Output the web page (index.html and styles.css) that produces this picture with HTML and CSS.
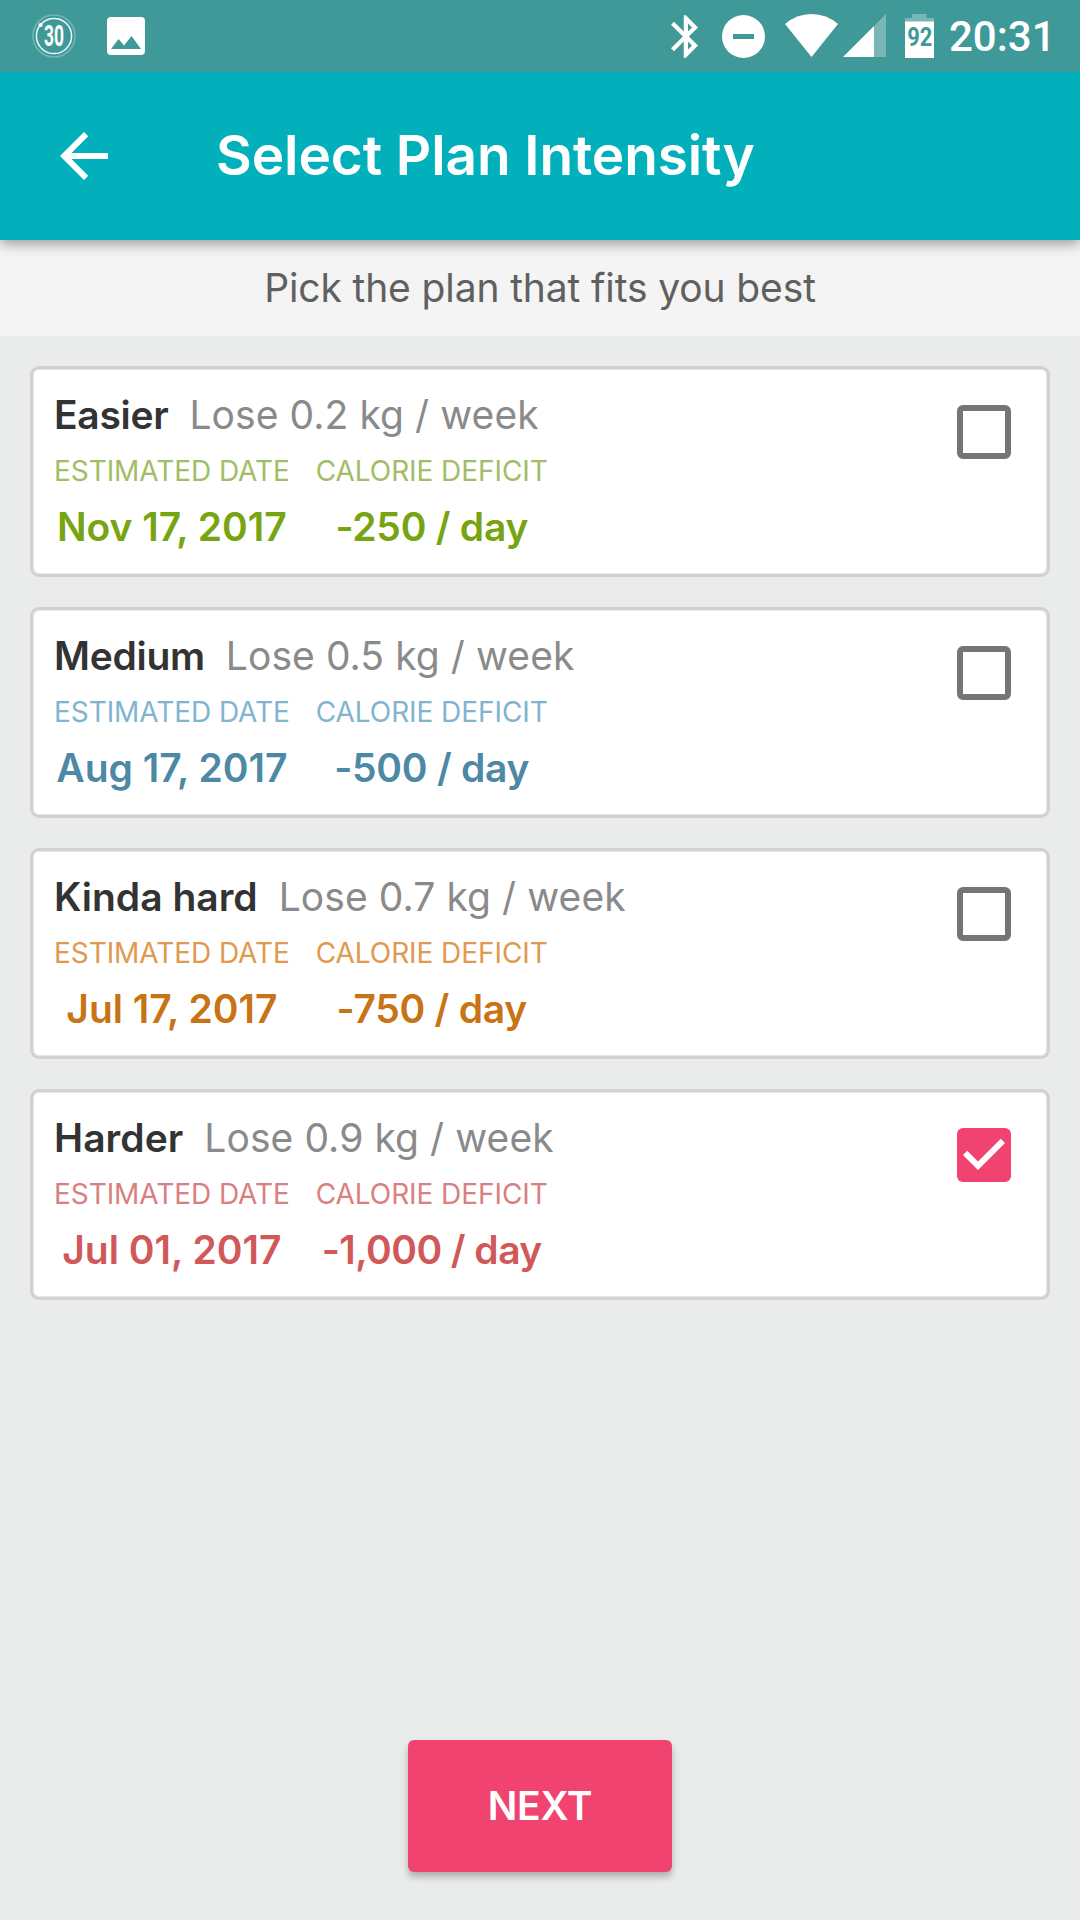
FILE: index.html
```html
<!DOCTYPE html>
<html lang="en">
<head>
<meta charset="utf-8">
<title>Select Plan Intensity</title>
<link rel="stylesheet" href="styles.css">
</head>
<body>
<div class="status-bar">
  <div class="status-group">
    <svg class="icon-app" width="46" height="46" viewBox="0 0 46 46">
      <circle cx="23" cy="23" r="21" fill="none" stroke="#fff" stroke-opacity=".28" stroke-width="1.6"/>
      <circle cx="23" cy="23" r="17.6" fill="none" stroke="#fff" stroke-opacity=".92" stroke-width="1.5"/>
      <circle cx="9.6" cy="12" r="2.1" fill="#fff"/>
      <text class="app-number" transform="translate(23 33.4) scale(.6 1)" text-anchor="middle">30</text>
    </svg>
    <svg class="icon-image" width="38" height="38" viewBox="0 0 38 38">
      <path fill="#fff" fill-rule="evenodd" d="M4 0h30a4 4 0 0 1 4 4v30a4 4 0 0 1-4 4H4a4 4 0 0 1-4-4V4a4 4 0 0 1 4-4zM4 32h30L24.500 19 17 28.500 11.500 22z"/>
    </svg>
  </div>
  <div class="status-group">
    <svg class="icon-bluetooth" width="27" height="43" viewBox="5 2 12.710 20">
      <path fill="#fff" d="M17.710 7.710L12 2h-1v7.590L6.410 5 5 6.410 10.590 12 5 17.590 6.410 19 11 14.410V22h1l5.710-5.710-4.300-4.290 4.300-4.290zM13 5.830l1.880 1.880L13 9.590V5.830zm1.880 10.460L13 18.170v-3.760l1.880 1.880z"/>
    </svg>
    <svg class="icon-dnd" width="43" height="43" viewBox="0 0 43 43">
      <path fill="#fff" fill-rule="evenodd" d="M21.500 0a21.500 21.500 0 1 1 0 43a21.500 21.500 0 1 1 0-43zM11 19v5h21v-5z"/>
    </svg>
    <svg class="icon-wifi" width="53" height="43" viewBox="0 0 53 43">
      <path fill="#fff" d="M26.500 43L0 10Q11.500 0 26.500 0T53 10z"/>
    </svg>
    <svg class="icon-signal" width="43" height="43" viewBox="0 0 43 43">
      <path fill="#fff" fill-opacity=".3" d="M31 12L43 0v43H31z"/>
      <path fill="#fff" d="M0 43L31 12v31z"/>
    </svg>
    <svg class="icon-battery" width="29" height="44" viewBox="0 0 29 44">
      <path fill="#fff" fill-opacity=".3" d="M7 0h14.500v4H29v4H0V4h7z"/>
      <path fill="#fff" d="M0 7.500h29V44H0z"/>
      <text class="battery-level" transform="translate(14.700 32) scale(.84 1)" text-anchor="middle">92</text>
    </svg>
    <span class="clock">20:31</span>
  </div>
</div>
<header class="app-bar">
  <svg class="back" width="72" height="72" viewBox="0 0 24 24"><path fill="#fff" d="M20 11H7.830l5.590-5.590L12 4l-8 8 8 8 1.410-1.410L7.830 13H20v-2z"/></svg>
  <h1 class="title">Select Plan Intensity</h1>
</header>
<p class="subtitle">Pick the plan that fits you best</p>
<main class="plans">
  <section class="plan easier">
    <div class="info">
      <div class="heading"><span class="name">Easier</span><span class="rate">Lose 0.2 kg / week</span></div>
      <div class="stats">
        <div class="stat"><span class="label">ESTIMATED DATE</span><span class="value">Nov 17, 2017</span></div>
        <div class="stat"><span class="label">CALORIE DEFICIT</span><span class="value deficit">-250 / day</span></div>
      </div>
    </div>
    <span class="checkbox"></span>
  </section>
  <section class="plan medium">
    <div class="info">
      <div class="heading"><span class="name">Medium</span><span class="rate">Lose 0.5 kg / week</span></div>
      <div class="stats">
        <div class="stat"><span class="label">ESTIMATED DATE</span><span class="value">Aug 17, 2017</span></div>
        <div class="stat"><span class="label">CALORIE DEFICIT</span><span class="value deficit">-500 / day</span></div>
      </div>
    </div>
    <span class="checkbox"></span>
  </section>
  <section class="plan kinda-hard">
    <div class="info">
      <div class="heading"><span class="name">Kinda hard</span><span class="rate">Lose 0.7 kg / week</span></div>
      <div class="stats">
        <div class="stat"><span class="label">ESTIMATED DATE</span><span class="value">Jul 17, 2017</span></div>
        <div class="stat"><span class="label">CALORIE DEFICIT</span><span class="value deficit">-750 / day</span></div>
      </div>
    </div>
    <span class="checkbox"></span>
  </section>
  <section class="plan harder">
    <div class="info">
      <div class="heading"><span class="name">Harder</span><span class="rate">Lose 0.9 kg / week</span></div>
      <div class="stats">
        <div class="stat"><span class="label">ESTIMATED DATE</span><span class="value">Jul 01, 2017</span></div>
        <div class="stat"><span class="label">CALORIE DEFICIT</span><span class="value deficit thousands">-1,000 / day</span></div>
      </div>
    </div>
    <span class="checkbox checked"><svg width="54" height="54" viewBox="3 3 18 18"><path fill="#fff" d="M10 17l-5-5 1.410-1.410L10 14.170l7.590-7.590L19 8z"/></svg></span>
  </section>
</main>
<footer class="actions"><button class="next" type="button">NEXT</button></footer>
</body>
</html>
```
FILE: styles.css
```css
* { box-sizing: border-box; }

body {
  margin: 0;
  width: 1080px;
  height: 1920px;
  display: flex;
  flex-direction: column;
  background: #eaeceb;
  font-family: Inter, "Open Sans", sans-serif;
  overflow: hidden;
}

svg { display: block; flex: none; }

.status-bar {
  position: relative;
  z-index: 2;
  height: 72px;
  flex: none;
  display: flex;
  justify-content: space-between;
  padding: 0 29px 0 31px;
  background: #3f9998;
}

.status-group { display: flex; align-items: flex-start; }
.icon-app { margin-top: 13px; }
.icon-image { margin: 17px 0 0 30px; }
.icon-bluetooth { margin: 15px 24px 0 0; }
.icon-dnd { margin: 15px 20px 0 0; }
.icon-wifi { margin: 14px 5px 0 0; }
.icon-signal { margin: 14px 19px 0 0; }
.icon-battery { margin: 14px 15px 0 0; }

.app-number { font: 700 29px Roboto, sans-serif; fill: #fff; }
.battery-level { font: 700 26px Roboto, sans-serif; fill: #3f9998; }

.clock {
  width: 102px;
  color: #fff;
  font: 500 42px/74px Roboto, sans-serif;
  white-space: nowrap;
}

.app-bar {
  position: relative;
  z-index: 1;
  height: 168px;
  flex: none;
  display: flex;
  align-items: center;
  padding-left: 48px;
  background: #01b0ba;
  box-shadow: 0 4px 12px rgba(0, 0, 0, .36);
}

.title {
  margin: 0 0 2px 96px;
  color: #fff;
  font-size: 55px;
  font-weight: 600;
  line-height: 72px;
  letter-spacing: -.1px;
}

.subtitle {
  height: 96px;
  flex: none;
  margin: 0;
  background: #f4f4f4;
  color: #606060;
  font-size: 39px;
  line-height: 95px;
  letter-spacing: -.12px;
  text-align: center;
}

.plans {
  display: flex;
  flex-direction: column;
  gap: 30px;
  padding: 30px;
}

.plan {
  height: 211px;
  display: flex;
  justify-content: space-between;
  padding: 22px 36px 0 21px;
  border: 3px solid #d1d1d1;
  border-radius: 9px;
  background: #fff;
  box-shadow: inset 0 0 0 1px #e6e6e6;
}

.info { display: flex; flex-direction: column; gap: 14px; }

.heading {
  display: flex;
  gap: 21px;
  font-size: 39px;
  line-height: 48px;
  white-space: nowrap;
}

.name { color: #333; font-weight: 600; }
.rate { color: #8a8a8a; letter-spacing: .08px; }
.easier .name { letter-spacing: -.3px; }
.medium .name { letter-spacing: -.3px; }
.harder .name { letter-spacing: .05px; }

.stats { display: flex; gap: 26px; }

.stat {
  display: flex;
  flex-direction: column;
  align-items: center;
  gap: 14px;
  white-space: nowrap;
}

.label { font-size: 28px; line-height: 36px; letter-spacing: -.07px; }
.value { font-size: 39px; font-weight: 600; line-height: 48px; }
.deficit { letter-spacing: -.25px; }
.thousands { letter-spacing: -.55px; }

.easier .label { color: #a1bd65; }
.easier .value { color: #77a411; }
.medium .label { color: #81b4d0; }
.medium .value { color: #4d89a5; }
.kinda-hard .label { color: #e0994e; }
.kinda-hard .value { color: #c87315; }
.harder .label { color: #da7f7f; }
.harder .value { color: #d15858; }

.checkbox {
  width: 54px;
  height: 54px;
  margin-top: 14px;
  border: 6px solid #757575;
  border-radius: 6px;
}

.checked { border: 0; background: #f0436f; }

.actions {
  display: flex;
  justify-content: center;
  margin-top: auto;
  padding-bottom: 48px;
}

.next {
  width: 264px;
  height: 132px;
  padding: 0 0 1px;
  border: 0;
  border-radius: 6px;
  background: #f0436f;
  box-shadow: 0 5px 7px rgba(0, 0, 0, .26);
  color: #fff;
  font: 600 39px/48px Inter, "Open Sans", sans-serif;
  letter-spacing: -.25px;
}
```
